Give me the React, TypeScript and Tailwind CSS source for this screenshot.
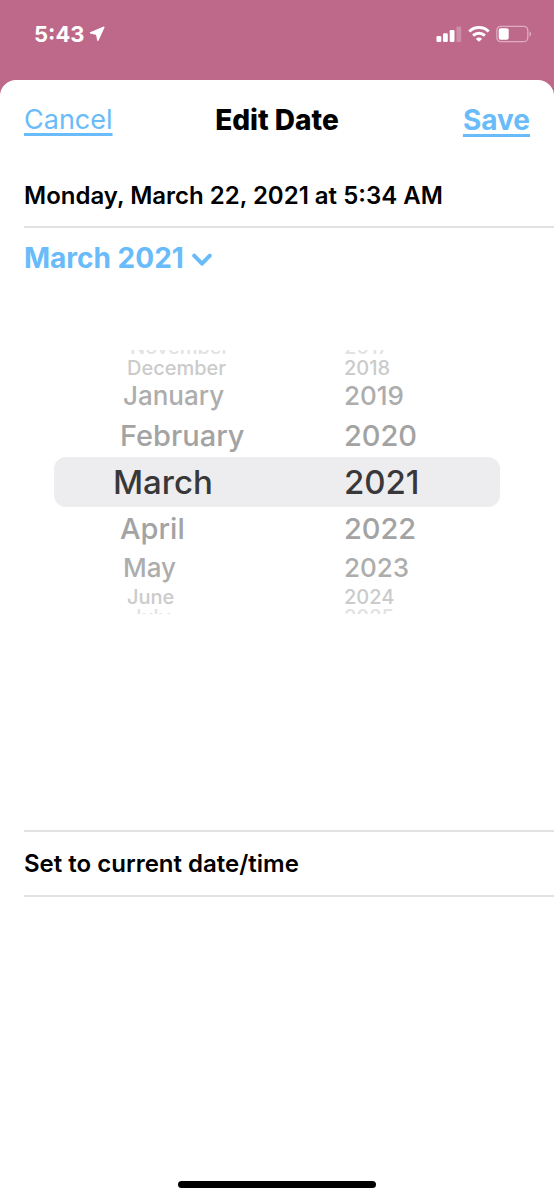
import { useState } from 'react'
import clsx from 'clsx'

interface WheelRow {
    month: string
    year: string
    className: string
    monthClassName: string
}

// The wheel fades and shrinks away from the selected row
const wheelRows: WheelRow[] = [
    { month: 'November', year: '2017', className: 'h-[7px] content-end text-xl leading-5 text-[#e2e2e2]', monthClassName: 'pl-[76px]' },
    { month: 'December', year: '2018', className: 'h-[21px] content-center text-xl leading-5 text-[#cbcbcb]', monthClassName: 'pl-[73px]' },
    { month: 'January', year: '2019', className: 'h-9 content-center text-[26px] leading-9 text-[#adadad]', monthClassName: 'pl-[69px]' },
    { month: 'February', year: '2020', className: 'h-[43px] content-center text-[29px] leading-9 text-[#a3a3a3]', monthClassName: 'pl-[66px]' },
    { month: 'March', year: '2021', className: 'h-[50px] content-center text-[33px] leading-10 text-[#38383a] bg-[#ededef] rounded-xl', monthClassName: 'pl-[59px]' },
    { month: 'April', year: '2022', className: 'h-[43px] content-center text-[29px] leading-9 text-[#a3a3a3]', monthClassName: 'pl-[66px]' },
    { month: 'May', year: '2023', className: 'h-9 content-center text-[26px] leading-9 text-[#adadad]', monthClassName: 'pl-[69px]' },
    { month: 'June', year: '2024', className: 'h-[21px] content-center text-xl leading-5 text-[#cbcbcb]', monthClassName: 'pl-[73px]' },
    { month: 'July', year: '2025', className: 'h-[7px] content-start text-xl leading-5 text-[#e2e2e2]', monthClassName: 'pl-[76px]' },
]

function StatusBar() {
    return (
        <div className="flex h-20 items-start justify-between pt-5 pr-[22px] pl-[34px] text-white">
            <div className="flex items-center gap-1">
                <span className="text-[22px] leading-7 font-bold">5:43</span>
                <svg className="h-4 w-4" viewBox="0 0 16 16" fill="currentColor" stroke="currentColor" strokeWidth="1.400" strokeLinejoin="round" aria-hidden="true">
                    <path d="M1.500 6.800L14.900 1.200L8.900 14.300L7.600 8.200z" />
                </svg>
            </div>
            <div className="flex h-7 items-center gap-1.5">
                <svg className="h-4 w-[26px]" viewBox="0 0 26 16" fill="currentColor" aria-hidden="true">
                    <rect x="0.500" y="10" width="4.800" height="6" rx="1.200" />
                    <rect x="7" y="7.300" width="4.800" height="8.700" rx="1.200" />
                    <rect x="13.700" y="4" width="4.800" height="12" rx="1.200" />
                    <rect x="20.400" y="0.500" width="4.800" height="15.500" rx="1.200" opacity="0.250" />
                </svg>
                <svg className="h-4 w-[22px]" viewBox="0 0 22 16" fill="none" stroke="currentColor" strokeWidth="3" aria-hidden="true">
                    <path d="M1.300 5.500a14 14 0 0 1 19.400 0" />
                    <path d="M5.100 9.700a8.600 8.600 0 0 1 11.800 0" />
                    <path d="M11 15.700L7.900 12.900a4.400 4.400 0 0 1 6.200 0z" fill="currentColor" stroke="none" />
                </svg>
                <svg className="h-[18px] w-9" viewBox="0 0 36 18" aria-hidden="true">
                    <rect x="0.800" y="1.300" width="31" height="15.400" rx="4" fill="none" stroke="white" strokeOpacity="0.450" strokeWidth="1.300" />
                    <rect x="2.700" y="3.200" width="10" height="11.600" rx="2" fill="white" />
                    <path d="M33.500 6.500c2 .6 2 4.400 0 5z" fill="white" fillOpacity="0.500" />
                </svg>
            </div>
        </div>
    )
}

export default function App() {
    const [open, setOpen] = useState(true)
    const [selected, setSelected] = useState({ month: 'March', year: '2021' })

    return (
        <div className="flex min-h-screen flex-col bg-[#be698a] font-[Inter,'Liberation_Sans',sans-serif] text-black">
            <StatusBar />

            <main className="flex flex-1 flex-col rounded-t-2xl bg-white">
                <header className="grid h-20 grid-cols-3 items-center px-6">
                    <button className="justify-self-start text-[27px] leading-8 text-[#69bbf9] underline decoration-[3px] underline-offset-4">
                        Cancel
                    </button>
                    <h1 className="justify-self-center text-[28px] leading-8 font-extrabold whitespace-nowrap">Edit Date</h1>
                    <button className="justify-self-end text-[28px] leading-8 font-bold text-[#69bbf9] underline decoration-[3px] underline-offset-4">
                        Save
                    </button>
                </header>

                <p className="ml-6 border-b-2 border-[#e2e2e2] pt-5 pb-3.5 text-2xl leading-8 font-semibold">
                    Monday, March 22, 2021 at 5:34 AM
                </p>

                <button
                    className="mt-3 ml-6 flex items-center gap-2 self-start text-[28px] leading-9 font-bold text-[#69bbf9]"
                    aria-expanded={open}
                    onClick={() => setOpen(!open)}
                >
                    {selected.month} {selected.year}
                    <svg className="mt-1 h-5 w-5" viewBox="0 0 20 20" fill="none" stroke="currentColor" strokeWidth="4" strokeLinecap="round" strokeLinejoin="round" aria-hidden="true">
                        <path d="M2.200 5.700l7.800 8 7.800-8" />
                    </svg>
                </button>

                {/* Month and year wheel */}
                <div className="mx-[54px] mt-[74px] mb-[216px] font-medium">
                    {wheelRows.map((row) => (
                        <div key={row.month} className={clsx('grid grid-cols-[13fr_7fr] overflow-hidden', row.className)}>
                            <button
                                className={clsx('text-left', row.monthClassName)}
                                onClick={() => setSelected({ ...selected, month: row.month })}
                            >
                                {row.month}
                            </button>
                            <button className="text-left" onClick={() => setSelected({ ...selected, year: row.year })}>
                                {row.year}
                            </button>
                        </div>
                    ))}
                </div>

                <button className="ml-6 border-y-2 border-[#e2e2e2] pt-4 pb-[15px] text-left text-2xl leading-8 font-semibold">
                    Set to current date/time
                </button>

                <div className="mx-auto mt-auto mb-3 h-[7px] w-[198px] rounded-full bg-black" />
            </main>
        </div>
    )
}
